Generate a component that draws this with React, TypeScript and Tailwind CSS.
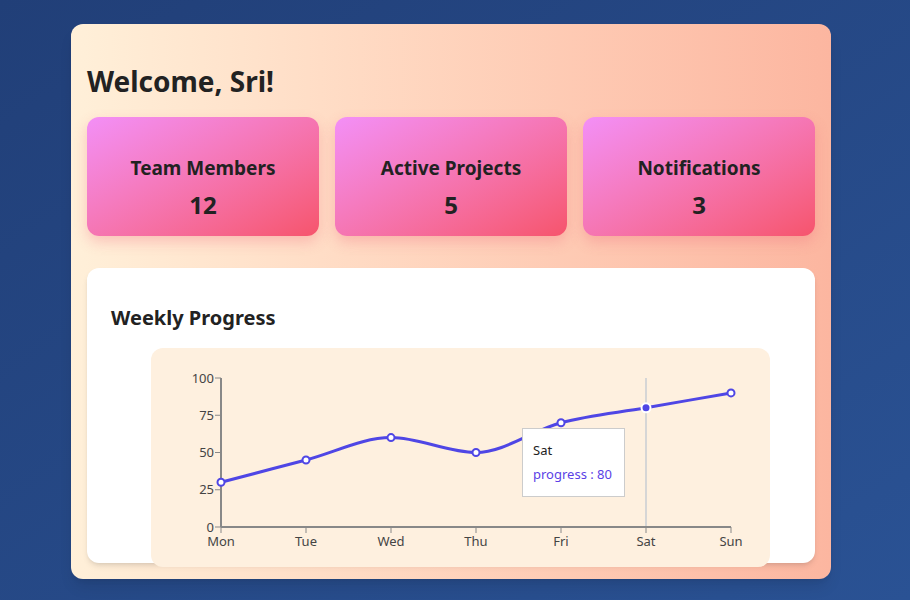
import React from "react";

const days = ["Mon", "Tue", "Wed", "Thu", "Fri", "Sat", "Sun"];
const values = [30, 45, 60, 50, 70, 80, 90];

const X0 = 70;
const STEP = 85;
const Y_TOP = 30;
const Y_BOT = 179;

const px = (i: number) => X0 + i * STEP;
const py = (v: number) => Y_BOT - (v / 100) * (Y_BOT - Y_TOP);

// monotone-x curve, same maths as d3's curveMonotoneX
function monotonePath(pts: [number, number][]) {
  const n = pts.length;
  const slopes: number[] = [];
  for (let i = 0; i < n - 1; i++) {
    slopes.push((pts[i + 1][1] - pts[i][1]) / (pts[i + 1][0] - pts[i][0]));
  }
  const t: number[] = new Array(n).fill(0);
  for (let i = 1; i < n - 1; i++) {
    const s0 = slopes[i - 1];
    const s1 = slopes[i];
    if (s0 * s1 <= 0) continue;
    const h0 = pts[i][0] - pts[i - 1][0];
    const h1 = pts[i + 1][0] - pts[i][0];
    const p = (s0 * h1 + s1 * h0) / (h0 + h1);
    t[i] = (Math.sign(s0) + Math.sign(s1)) * Math.min(Math.abs(s0), Math.abs(s1), 0.5 * Math.abs(p));
  }
  t[0] = (3 * slopes[0] - t[1]) / 2;
  t[n - 1] = (3 * slopes[n - 2] - t[n - 2]) / 2;
  let d = `M${pts[0][0]},${pts[0][1]}`;
  for (let i = 0; i < n - 1; i++) {
    const dx = (pts[i + 1][0] - pts[i][0]) / 3;
    d += ` C${pts[i][0] + dx},${pts[i][1] + dx * t[i]} ${pts[i + 1][0] - dx},${pts[i + 1][1] - dx * t[i + 1]} ${pts[i + 1][0]},${pts[i + 1][1]}`;
  }
  return d;
}

function StatCard({ title, value }: { title: string; value: number }) {
  return (
    <div className="flex h-[119px] flex-col items-center rounded-xl bg-gradient-to-br from-[#f38ff7] to-[#f6546c] pt-[41px] shadow-[0_6px_14px_rgba(240,100,120,0.3)]">
      <div className="text-[19px] font-bold leading-[20px] text-[#222]">{title}</div>
      <div className="mt-[15px] text-[24px] font-bold leading-none text-[#222]">{value}</div>
    </div>
  );
}

function Chart() {
  const pts = values.map((v, i) => [px(i), py(v)] as [number, number]);
  const active = 5;
  return (
    <div className="relative ml-[40px] h-[219px] w-[619px] rounded-xl bg-[#fef0df]">
      <svg width="619" height="219" className="absolute left-0 top-0">
        <line x1={px(active)} y1={Y_TOP} x2={px(active)} y2={Y_BOT} stroke="#d6d6d6" strokeWidth="2" />
        <line x1={X0} y1={Y_TOP} x2={X0} y2={Y_BOT} stroke="#888" strokeWidth="2" />
        <line x1={X0} y1={Y_BOT} x2={px(6)} y2={Y_BOT} stroke="#888" strokeWidth="2" />
        {[0, 25, 50, 75, 100].map((v) => (
          <g key={v}>
            <line x1={X0 - 6} y1={py(v)} x2={X0} y2={py(v)} stroke="#888" strokeWidth="1" />
            <text x={X0 - 7} y={py(v) + 4.5} textAnchor="end" fontSize="13" fill="#444">
              {v}
            </text>
          </g>
        ))}
        {days.map((d, i) => (
          <g key={d}>
            <line x1={px(i)} y1={Y_BOT} x2={px(i)} y2={Y_BOT + 6} stroke="#888" strokeWidth="1" />
            <text x={px(i)} y={Y_BOT + 19} textAnchor="middle" fontSize="13" fill="#444">
              {d}
            </text>
          </g>
        ))}
        <path d={monotonePath(pts)} fill="none" stroke="#4f46e5" strokeWidth="3" />
        {pts.map(([x, y], i) =>
          i === active ? (
            <circle key={i} cx={x} cy={y} r="4.5" fill="#4f46e5" stroke="#fff" strokeWidth="2" />
          ) : (
            <circle key={i} cx={x} cy={y} r="3.5" fill="#fff" stroke="#4f46e5" strokeWidth="2" />
          )
        )}
      </svg>
      <div className="absolute left-[371px] top-[80px] h-[69px] w-[103px] border border-[#ccc] bg-white px-[10px] pt-[15px] text-[13px] leading-none">
        <div className="text-[#222]">Sat</div>
        <div className="mt-[11px] text-[#5b3fe6]">progress : 80</div>
      </div>
    </div>
  );
}

export default function App() {
  return (
    <div
      className="flex min-h-[600px] w-full bg-gradient-to-br from-[#213f78] to-[#2a5294] pl-[71px] pt-[24px]"
      style={{ fontFamily: '"Noto Sans", "Open Sans", sans-serif' }}
    >
      <div className="h-[555px] w-[760px] rounded-xl bg-gradient-to-r from-[#fff0d9] to-[#fcb6a0] px-4 pt-[43px] shadow-lg">
        <h1 className="text-[28px] font-bold leading-none text-[#222]">Welcome, Sri!</h1>
        <div className="mt-[22px] grid grid-cols-3 gap-4">
          <StatCard title="Team Members" value={12} />
          <StatCard title="Active Projects" value={5} />
          <StatCard title="Notifications" value={3} />
        </div>
        <div className="mt-8 h-[295px] rounded-xl bg-white px-6 pt-[40px] shadow-md">
          <h2 className="text-[20px] font-bold leading-none text-[#222]">Weekly Progress</h2>
          <div className="mt-[20px]">
            <Chart />
          </div>
        </div>
      </div>
    </div>
  );
}
